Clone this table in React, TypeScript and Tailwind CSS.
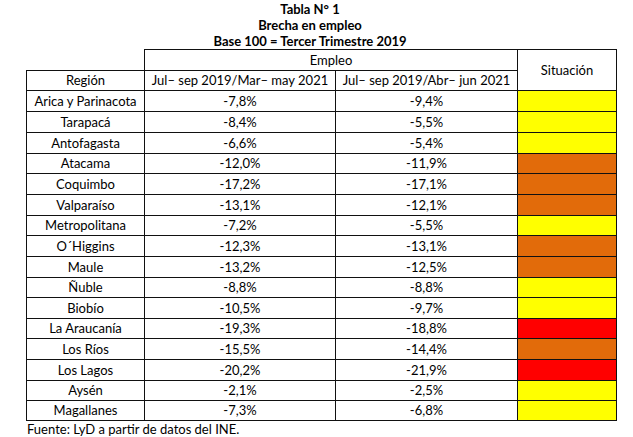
import React from "react";

type Row = { r: string; a: string; b: string; s: "Y" | "O" | "R"; tall: boolean };

const rows: Row[] = [
  { r: "Arica y Parinacota", a: "-7,8%", b: "-9,4%", s: "Y", tall: true },
  { r: "Tarapacá", a: "-8,4%", b: "-5,5%", s: "Y", tall: true },
  { r: "Antofagasta", a: "-6,6%", b: "-5,4%", s: "Y", tall: true },
  { r: "Atacama", a: "-12,0%", b: "-11,9%", s: "O", tall: false },
  { r: "Coquimbo", a: "-17,2%", b: "-17,1%", s: "O", tall: true },
  { r: "Valparaíso", a: "-13,1%", b: "-12,1%", s: "O", tall: true },
  { r: "Metropolitana", a: "-7,2%", b: "-5,5%", s: "Y", tall: false },
  { r: "O´Higgins", a: "-12,3%", b: "-13,1%", s: "O", tall: true },
  { r: "Maule", a: "-13,2%", b: "-12,5%", s: "O", tall: true },
  { r: "Ñuble", a: "-8,8%", b: "-8,8%", s: "Y", tall: false },
  { r: "Biobío", a: "-10,5%", b: "-9,7%", s: "Y", tall: true },
  { r: "La Araucanía", a: "-19,3%", b: "-18,8%", s: "R", tall: false },
  { r: "Los Ríos", a: "-15,5%", b: "-14,4%", s: "O", tall: true },
  { r: "Los Lagos", a: "-20,2%", b: "-21,9%", s: "R", tall: true },
  { r: "Aysén", a: "-2,1%", b: "-2,5%", s: "Y", tall: false },
  { r: "Magallanes", a: "-7,3%", b: "-6,8%", s: "Y", tall: false },
];

const fill = (s: Row["s"]) =>
  s === "Y" ? "bg-[#ffff00]" : s === "O" ? "bg-[#e26b0a]" : "bg-[#ff0000]";

export default function App() {
  const cell = "border border-[#111] text-center align-middle p-0 leading-[15px]";
  return (
    <div
      className="w-[633px] h-[437px] bg-white text-black overflow-hidden text-[13px]"
      style={{ fontFamily: "Lato, 'Open Sans', sans-serif" }}
    >
      <div className="w-[620px] text-center font-bold leading-[16px] pt-[1px]">
        <div>Tabla N° 1</div>
        <div>Brecha en empleo</div>
        <div>Base 100 = Tercer Trimestre 2019</div>
      </div>
      <div className="pl-[26px]">
        <table className="border-collapse table-fixed w-[590px]">
          <colgroup>
            <col className="w-[118px]" />
            <col className="w-[191px]" />
            <col className="w-[182px]" />
            <col className="w-[99px]" />
          </colgroup>
          <tbody>
            <tr>
              <td className="p-0 h-[21px]"></td>
              <td colSpan={2} className={`${cell} h-[21px]`}>
                Empleo
              </td>
              <td rowSpan={2} className={cell}>
                Situación
              </td>
            </tr>
            <tr>
              <td className={`${cell} h-[20px]`}>Región</td>
              <td className={`${cell} h-[20px]`}>Jul– sep 2019/Mar– may 2021</td>
              <td className={`${cell} h-[20px]`}>Jul– sep 2019/Abr– jun 2021</td>
            </tr>
            {rows.map((row) => (
              <tr key={row.r}>
                <td className={`${cell} ${row.tall ? "h-[21px]" : "h-[20px]"}`}>{row.r}</td>
                <td className={cell}>{row.a}</td>
                <td className={cell}>{row.b}</td>
                <td className={`${cell} ${fill(row.s)}`}></td>
              </tr>
            ))}
          </tbody>
        </table>
        <div className="leading-[16px] pl-[1px]">Fuente: LyD a partir de datos del INE.</div>
      </div>
    </div>
  );
}
